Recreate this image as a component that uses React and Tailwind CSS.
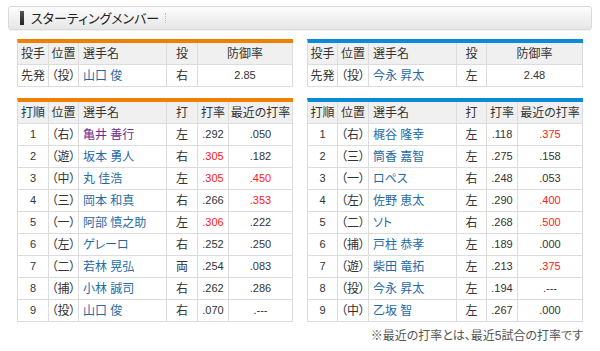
import React from "react";

const home = {
  pitcher: { name: "山口 俊", hand: "右", era: "2.85" },
  lineup: [
    [1, "右", "亀井 善行", "左", ".292", ".050", false, false, true],
    [2, "遊", "坂本 勇人", "右", ".305", ".182", true, false],
    [3, "中", "丸 佳浩", "左", ".305", ".450", true, true],
    [4, "三", "岡本 和真", "右", ".266", ".353", false, true],
    [5, "一", "阿部 慎之助", "左", ".306", ".222", true, false],
    [6, "左", "ゲレーロ", "右", ".252", ".250", false, false],
    [7, "二", "若林 晃弘", "両", ".254", ".083", false, false],
    [8, "捕", "小林 誠司", "右", ".262", ".286", false, false],
    [9, "投", "山口 俊", "右", ".070", ".---", false, false],
  ],
};

const away = {
  pitcher: { name: "今永 昇太", hand: "左", era: "2.48" },
  lineup: [
    [1, "右", "梶谷 隆幸", "左", ".118", ".375", false, true],
    [2, "三", "筒香 嘉智", "左", ".275", ".158", false, false],
    [3, "一", "ロペス", "右", ".248", ".053", false, false],
    [4, "左", "佐野 恵太", "左", ".290", ".400", false, true],
    [5, "二", "ソト", "右", ".268", ".500", false, true],
    [6, "捕", "戸柱 恭孝", "左", ".189", ".000", false, false],
    [7, "遊", "柴田 竜拓", "左", ".213", ".375", false, true],
    [8, "投", "今永 昇太", "左", ".194", ".---", false, false],
    [9, "中", "乙坂 智", "左", ".267", ".000", false, false],
  ],
};

// cell helpers
const c = "flex items-center justify-center border-r border-[#dcdcdc]";
const l = "flex items-center pl-[4px] border-r border-[#dcdcdc]";

const PitcherTable = ({ p, bar, cols }) => (
  <div className={`w-[276px] border-l border-t-4 border-l-[#dcdcdc] ${bar}`}>
    <div className={`grid ${cols} h-[22px] border-b border-[#dcdcdc] bg-[#f0f0f0]`}>
      <div className={c}>投手</div>
      <div className={c}>位置</div>
      <div className={l}>選手名</div>
      <div className={c}>投</div>
      <div className={c}>防御率</div>
    </div>
    <div className={`grid ${cols} h-[22px] border-b border-[#dcdcdc]`}>
      <div className={c}>先発</div>
      <div className={c}>（投）</div>
      <div className={`${l} text-[#1f6aa6]`}>{p.name}</div>
      <div className={c}>{p.hand}</div>
      <div className={`${c} text-[11px]`}>{p.era}</div>
    </div>
  </div>
);

const LineupTable = ({ rows, bar, cols }) => (
  <div className={`w-[276px] border-l border-t-4 border-l-[#dcdcdc] ${bar}`}>
    <div className={`grid ${cols} h-[22px] border-b border-[#dcdcdc] bg-[#f0f0f0]`}>
      <div className={c}>打順</div>
      <div className={c}>位置</div>
      <div className={l}>選手名</div>
      <div className={c}>打</div>
      <div className={c}>打率</div>
      <div className={c}>最近の打率</div>
    </div>
    {rows.map((r) => (
      <div key={r[0]} className={`grid ${cols} h-[22px] border-b border-[#dcdcdc]`}>
        <div className={`${c} text-[11px]`}>{r[0]}</div>
        <div className={c}>（{r[1]}）</div>
        <div className={`${l} ${r[8] ? "text-[#6b2d8f]" : "text-[#1f6aa6]"}`}>{r[2]}</div>
        <div className={c}>{r[3]}</div>
        <div className={`${c} text-[11px] ${r[6] ? "text-[#ff1a1a]" : ""}`}>{r[4]}</div>
        <div className={`${c} text-[11px] ${r[7] ? "text-[#ff1a1a]" : ""}`}>{r[5]}</div>
      </div>
    ))}
  </div>
);

export default function App() {
  return (
    <div className="w-[600px] h-[351px] bg-white text-[#333] text-[12px] leading-none font-['Liberation_Sans','Noto_Sans_CJK_JP',sans-serif] [font-feature-settings:'palt'] overflow-hidden">
      <div className="mx-[8px] mt-[6px] h-[24px] flex items-center rounded-[3px] border border-[#dadada] bg-gradient-to-b from-[#fdfdfd] to-[#e6e6e6] shadow-[0_1px_1px_rgba(0,0,0,0.06)]">
        <div className="ml-[11px] w-[4px] h-[14px] bg-gradient-to-b from-[#555] to-[#222]" />
        <span className="ml-[7px] text-[13px] text-[#222]">スターティングメンバー</span>
        <div className="ml-[6px] h-[10px] border-l border-dotted border-[#bbb]" />
      </div>

      <div className="flex items-start pl-[17px] gap-[14px] mt-[9px]">
        <PitcherTable p={home.pitcher} bar="border-t-[#f08000]" cols="grid-cols-[31px_30px_88px_31px_1fr]" />
        <PitcherTable p={away.pitcher} bar="border-t-[#0a8bd9]" cols="grid-cols-[30px_31px_88px_30px_1fr]" />
      </div>

      <div className="flex items-start pl-[17px] gap-[14px] mt-[11px]">
        <LineupTable rows={home.lineup} bar="border-t-[#f08000]" cols="grid-cols-[31px_30px_88px_31px_31px_1fr]" />
        <div className="flex flex-col">
          <LineupTable rows={away.lineup} bar="border-t-[#0a8bd9]" cols="grid-cols-[30px_31px_88px_30px_31px_1fr]" />
          <p className="mt-[8px] text-right text-[12px] text-[#555]">※最近の打率とは、最近5試合の打率です</p>
        </div>
      </div>
    </div>
  );
}
